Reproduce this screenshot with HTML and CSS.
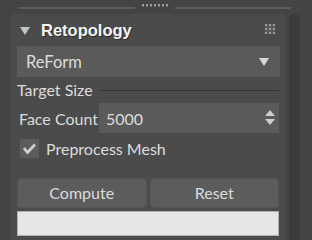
FILE: index.html
```html
<!DOCTYPE html>
<html lang="en">
<head>
    <meta charset="UTF-8"/>
    <title>Retopology</title>
    <link rel="stylesheet" href="styles.css">
</head>
<body>

<div class="topbar">
    <div class="topline"></div>
    <div class="grip-dots">
        <span></span><span></span><span></span><span></span><span></span><span></span><span></span>
    </div>
    <div class="topline"></div>
</div>

<div class="container">
    <div class="panel">
        <div class="panel-header">
            <span class="caret"></span>
            <h2>Retopology</h2>
            <svg class="grip" width="10" height="10" viewBox="0 0 10 10">
                <rect x="0" y="0" width="10" height="10" fill="#5a5a5a"/>
                <g fill="#9a9a9a">
                    <rect x="0" y="0" width="2" height="2"/><rect x="4" y="0" width="2" height="2"/><rect x="8" y="0" width="2" height="2"/>
                    <rect x="0" y="4" width="2" height="2"/><rect x="4" y="4" width="2" height="2"/><rect x="8" y="4" width="2" height="2"/>
                    <rect x="0" y="8" width="2" height="2"/><rect x="4" y="8" width="2" height="2"/><rect x="8" y="8" width="2" height="2"/>
                </g>
            </svg>
        </div>

        <div class="select">
            <span>ReForm</span>
            <span class="select-arrow"></span>
        </div>

        <div class="group-title">
            <span>Target Size</span>
            <div class="group-line"></div>
        </div>

        <div class="field">
            <label>Face Count</label>
            <div class="spinner">
                <span>5000</span>
                <svg width="10" height="16" viewBox="0 0 10 16">
                    <polygon points="5,0 10,6 0,6" fill="#cfcfcf"/>
                    <polygon points="0,9 10,9 5,15" fill="#cfcfcf"/>
                </svg>
            </div>
        </div>

        <div class="check-row">
            <div class="checkbox">
                <svg width="13" height="11" viewBox="0 0 13 11">
                    <path d="M1 5 L4.5 9.5 L12 1.5" stroke="#cfcfcf" stroke-width="2.8" fill="none"/>
                </svg>
            </div>
            <span>Preprocess Mesh</span>
        </div>

        <div class="buttons">
            <button>Compute</button>
            <button>Reset</button>
        </div>

        <div class="progress"></div>
    </div>

    <div class="scroll-track"></div>
</div>

</body>
</html>
```

FILE: styles.css
```css
* {
    box-sizing: border-box;
}

body {
    margin: 0;
    background: #444444;
    font-family: Lato, Arial, sans-serif;
    color: #dcdcdc;
    width: 312px;
    height: 240px;
    overflow: hidden;
}

.topbar {
    display: flex;
    align-items: center;
    height: 13px;
    padding: 0 21px 0 19px;
    gap: 7px;
}

.topline {
    flex: 1;
    height: 2px;
    background: #5e5e5e;
    margin-top: 2px;
}

.grip-dots {
    display: flex;
    gap: 2px;
    margin-top: -2px;
}

.grip-dots span {
    width: 2px;
    height: 3px;
    background: #9c9c9c;
    border-bottom: 1px solid #6a6a6a;
}

.container {
    display: flex;
    gap: 4px;
    padding-left: 11px;
    margin-top: 1px;
}

.panel {
    width: 274px;
    height: 230px;
    background: #4b4b4b;
    border-radius: 3px 3px 0 0;
    padding: 0 6px;
}

.panel-header {
    display: flex;
    align-items: center;
    height: 32px;
    padding-left: 3px;
}

.caret {
    width: 0;
    height: 0;
    border-left: 5px solid transparent;
    border-right: 5px solid transparent;
    border-top: 8px solid #c4c4c4;
    margin-top: 1px;
}

.panel-header h2 {
    margin: 0 0 0 11px;
    font-family: "Liberation Sans", Arial, sans-serif;
    font-size: 16.5px;
    font-weight: bold;
    color: #f4f4f4;
    text-shadow: 1px 1px 0 #2e2e2e;
    flex: 1;
}

.grip {
    margin-right: 4px;
    margin-top: -2px;
}

.select {
    display: flex;
    align-items: center;
    justify-content: space-between;
    height: 31px;
    background: #5a5a5a;
    padding: 0 11px 0 9px;
    font-size: 16.5px;
    margin-right: -1px;
}

.select-arrow {
    width: 0;
    height: 0;
    border-left: 5px solid transparent;
    border-right: 5px solid transparent;
    border-top: 8px solid #d8d8d8;
}

.group-title {
    display: flex;
    align-items: center;
    height: 22px;
    font-size: 16px;
    margin-top: 1px;
}

.group-line {
    flex: 1;
    height: 1px;
    background: #333333;
    margin-left: 6px;
    margin-top: 2px;
}

.field {
    display: flex;
    align-items: center;
    height: 30px;
    margin-top: 3px;
    font-size: 16px;
    white-space: nowrap;
}

.field label {
    padding-left: 2px;
    width: 82px;
}

.spinner {
    flex: 1;
    display: flex;
    align-items: center;
    justify-content: space-between;
    height: 30px;
    background: #5a5a5a;
    padding: 0 4px 0 7px;
}

.check-row {
    display: flex;
    align-items: center;
    margin-top: 6px;
    height: 19px;
    font-size: 16px;
    white-space: nowrap;
}

.checkbox {
    width: 19px;
    height: 19px;
    background: #5c5c5c;
    margin: 0 7px 0 3px;
    display: flex;
    align-items: center;
    justify-content: center;
}

.buttons {
    display: flex;
    gap: 3px;
    margin-top: 20px;
}

.buttons button {
    flex: 1;
    height: 30px;
    background: #5c5c5c;
    border: 1px solid #555555;
    border-radius: 4px;
    color: #dcdcdc;
    font-family: Lato, Arial, sans-serif;
    font-size: 16px;
    padding: 0 0 2px;
}

.progress {
    height: 25px;
    margin-top: 3px;
    background: #e6e6e6;
    border: 1px solid #b0b0b0;
}

.scroll-track {
    width: 11px;
    height: 230px;
    background: #3b3b3b;
    border-radius: 5px 5px 0 0;
}
```
